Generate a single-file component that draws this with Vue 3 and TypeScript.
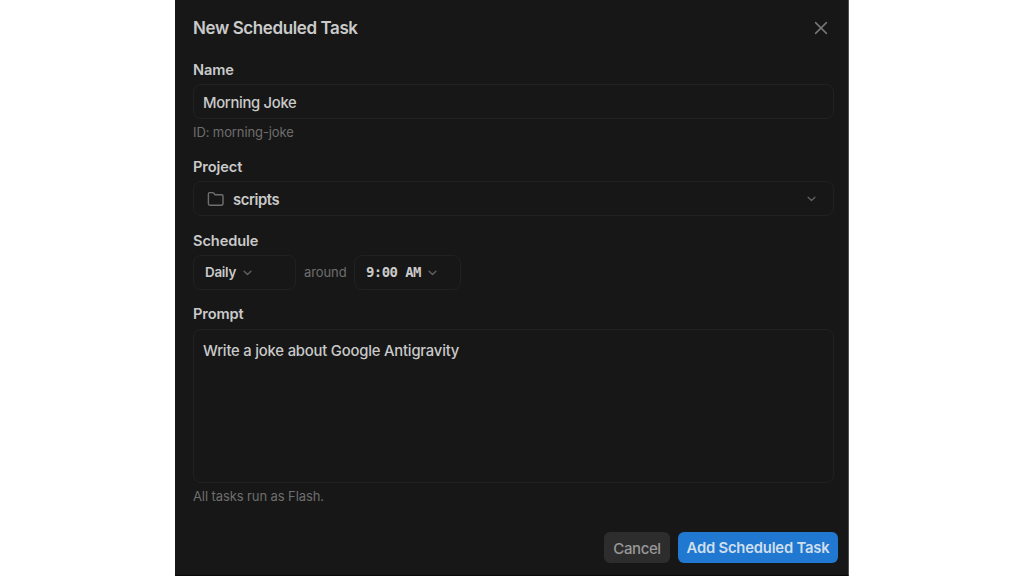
<script setup lang="ts">
import { ref } from 'vue'

const name = ref('Morning Joke')
const prompt = ref('Write a joke about Google Antigravity')
const taskId = 'morning-joke'
const project = 'scripts'
const frequency = 'Daily'
const time = '9:00 AM'
</script>

<template>
  <main class="stage">
    <section class="dialog">
      <header class="head">
        <h1 class="title"><span>New Scheduled Task</span></h1>
        <svg class="close" viewBox="0 0 14 14"><path d="M1.6 1.6 12.4 12.4M12.4 1.6 1.6 12.4" /></svg>
      </header>

      <div class="field name">
        <label class="label"><span>Name</span></label>
        <div class="box"><span class="value v-name">{{ name }}</span></div>
        <p class="hint id"><span>ID: {{ taskId }}</span></p>
      </div>

      <div class="field project">
        <label class="label"><span>Project</span></label>
        <div class="box select">
          <svg class="folder" viewBox="0 0 18 16">
            <path d="M1.4 12.8V2.9Q1.4 1.6 2.7 1.6H5.6Q6.3 1.6 6.8 2.2L8.1 3.7H14.6Q16 3.7 16 5.1V12.8Q16 14.2 14.6 14.2H2.8Q1.4 14.2 1.4 12.8Z" />
          </svg>
          <span class="value v-project">{{ project }}</span>
          <svg class="chev wide" viewBox="0 0 10 6"><path d="M1.2 1 5 4.7 8.8 1" /></svg>
        </div>
      </div>

      <div class="field schedule">
        <label class="label"><span>Schedule</span></label>
        <div class="row">
          <div class="box freq">
            <span class="small">{{ frequency }}</span>
            <svg class="chev" viewBox="0 0 10 6"><path d="M1.2 1 5 4.7 8.8 1" /></svg>
          </div>
          <span class="around">around</span>
          <div class="box time">
            <span class="mono">{{ time }}</span>
            <svg class="chev" viewBox="0 0 10 6"><path d="M1.2 1 5 4.7 8.8 1" /></svg>
          </div>
        </div>
      </div>

      <div class="field prompt">
        <label class="label"><span>Prompt</span></label>
        <div class="box area"><span class="value v-prompt">{{ prompt }}</span></div>
        <p class="hint"><span>All tasks run as Flash.</span></p>
      </div>

      <footer class="actions">
        <button class="btn cancel" type="button"><span>Cancel</span></button>
        <button class="btn add" type="button"><span>Add Scheduled Task</span></button>
      </footer>
    </section>
  </main>
</template>

<style>
body {
  background: #fff;
}
</style>

<style scoped>
.stage {
  height: 576px;
  overflow: hidden;
  padding-left: 175px;
  box-sizing: border-box;
  font-family: Inter, "Liberation Sans", sans-serif;
}
.dialog {
  width: 674px;
  height: 576px;
  box-sizing: border-box;
  padding: 0 15px 0 18px;
  background: #171717;
  border-right: 1px solid #505050;
  border-bottom: 1px solid #090909;
  color: #cacaca;
}
.head {
  height: 56px;
  display: flex;
  align-items: center;
  justify-content: space-between;
}
.title {
  margin: 0;
  font-size: 17px;
  line-height: 22px;
  font-weight: 600;
  letter-spacing: -0.4px;
  white-space: nowrap;
}
.close {
  width: 14px;
  height: 14px;
  margin-right: 5px;
  stroke: #777;
}
svg {
  flex: none;
  fill: none;
  stroke: #6d6d6d;
  stroke-width: 1.5;
  stroke-linecap: round;
  stroke-linejoin: round;
}
.field {
  width: 641px;
}
.name {
  padding-top: 4px;
}
.project,
.schedule {
  padding-top: 15px;
}
.prompt {
  padding-top: 14px;
}
.label {
  display: block;
  height: 20px;
  margin-bottom: 4px;
  font-size: 14.6px;
  line-height: 20px;
  font-weight: 600;
  letter-spacing: -0.08px;
}
.prompt .label {
  margin-bottom: 5px;
}
.box {
  box-sizing: border-box;
  height: 35px;
  display: flex;
  align-items: center;
  border: 1px solid #212121;
  border-radius: 8px;
  padding: 2px 9px 0;
}
.value {
  font-size: 14.8px;
  line-height: 20px;
  font-weight: 500;
  letter-spacing: -0.19px;
  white-space: pre;
}
.v-name {
  letter-spacing: -0.3px;
}
.hint {
  margin: 4px 0 0;
  height: 19px;
  font-size: 13px;
  line-height: 19px;
  letter-spacing: -0.1px;
  color: #6e6e6e;
}
.select {
  padding: 0 16px 0 13px;
}
.v-project {
  padding-top: 2px;
  font-weight: 600;
  letter-spacing: -0.4px;
}
.folder {
  width: 18px;
  height: 16px;
  margin-right: 8px;
  stroke: #707070;
  stroke-width: 1.4;
}
.chev {
  width: 9px;
  height: 6px;
  margin-left: 7px;
  stroke: #606060;
}
.wide {
  margin-left: auto;
  margin-right: 1px;
}
.row {
  display: flex;
  align-items: center;
}
.freq {
  width: 103px;
  padding: 0 11px;
}
.time {
  width: 107px;
  padding: 0 11px;
}
.small {
  padding-bottom: 2px;
  font-size: 13.4px;
  font-weight: 600;
  letter-spacing: -0.25px;
}
.around {
  width: 58px;
  padding: 0 0 2px 8px;
  box-sizing: border-box;
  font-size: 13px;
  letter-spacing: -0.1px;
  color: #6e6e6e;
}
.mono {
  padding-bottom: 1px;
  font-family: "DejaVu Sans Mono", monospace;
  font-size: 14px;
  font-weight: 700;
  letter-spacing: -0.58px;
  white-space: pre;
}
.area {
  height: 154px;
  align-items: flex-start;
  padding-top: 11px;
}
.actions {
  display: flex;
  justify-content: flex-end;
  gap: 8px;
  margin-top: 26px;
  margin-right: -5px;
}
.btn {
  height: 31px;
  border: 0;
  border-radius: 6px;
  padding: 1px 0 0;
  font-family: inherit;
  font-size: 15px;
  font-weight: 500;
  white-space: nowrap;
}
.cancel {
  width: 66px;
  background: #2d2d2d;
  color: #989898;
  letter-spacing: -0.4px;
}
.add {
  width: 160px;
  background: #2078d0;
  color: #cfdfee;
  font-size: 14.8px;
  font-weight: 600;
  letter-spacing: -0.2px;
}
</style>
